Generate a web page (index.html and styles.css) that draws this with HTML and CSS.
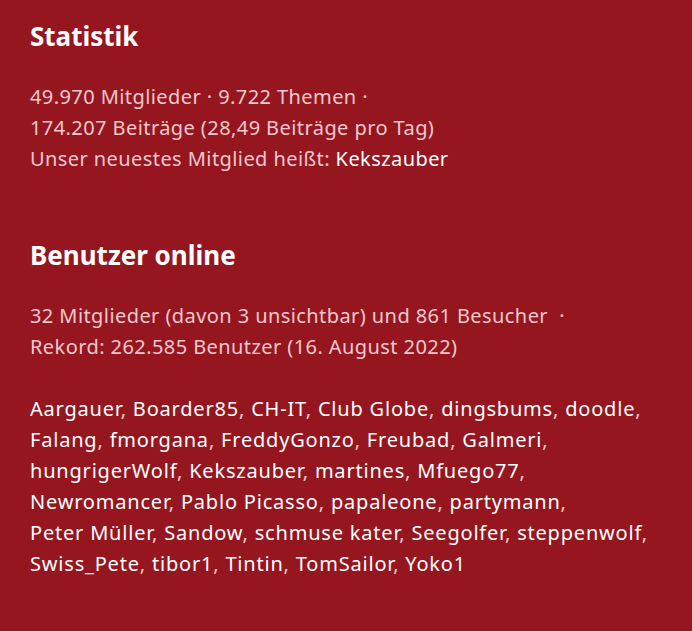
FILE: index.html
```html
<!DOCTYPE html>
<html lang="de">
<head>
  <meta charset="UTF-8">
  <title>Statistik</title>
  <link rel="stylesheet" href="styles.css">
</head>
<body>
  <div class="stat-block">
    <h3>Statistik</h3>
    <p class="stat-text">
      49.970 Mitglieder &middot; 9.722 Themen &middot;<br>
      174.207 Beiträge (28,49 Beiträge pro Tag)<br>
      Unser neuestes Mitglied heißt: <a href="#">Kekszauber</a>
    </p>
  </div>

  <div class="stat-block">
    <h3>Benutzer online</h3>
    <p class="stat-text">
      32 Mitglieder (davon 3 unsichtbar) und 861 Besucher &nbsp;&middot;<br>
      Rekord: 262.585 Benutzer (16. August 2022)
    </p>
    <p class="online-list">
      <a href="#">Aargauer</a>, <a href="#">Boarder85</a>, <a href="#">CH-IT</a>, <a href="#">Club Globe</a>, <a href="#">dingsbums</a>, <a href="#">doodle</a>,<br>
      <a href="#">Falang</a>, <a href="#">fmorgana</a>, <a href="#">FreddyGonzo</a>, <a href="#">Freubad</a>, <a href="#">Galmeri</a>,<br>
      <a href="#">hungrigerWolf</a>, <a href="#">Kekszauber</a>, <a href="#">martines</a>, <a href="#">Mfuego77</a>,<br>
      <a href="#">Newromancer</a>, <a href="#">Pablo Picasso</a>, <a href="#">papaleone</a>, <a href="#">partymann</a>,<br>
      <a href="#">Peter Müller</a>, <a href="#">Sandow</a>, <a href="#">schmuse kater</a>, <a href="#">Seegolfer</a>, <a href="#">steppenwolf</a>,<br>
      <a href="#">Swiss_Pete</a>, <a href="#">tibor1</a>, <a href="#">Tintin</a>, <a href="#">TomSailor</a>, <a href="#">Yoko1</a>
    </p>
  </div>
</body>
</html>
```

FILE: styles.css
```css
body {
  margin: 0;
  padding: 19px 30px;
  background-color: #961620;
  font-family: 'Noto Sans', 'Open Sans', sans-serif;
  color: #f3c8cd;
  min-height: 631px;
  box-sizing: border-box;
}
.stat-block {
  margin-bottom: 64px;
}
h3 {
  color: #fff;
  font-size: 26px;
  font-weight: 700;
  line-height: 34px;
  margin: 0 0 28px 0;
}
.stat-text, .online-list {
  font-size: 20px;
  line-height: 31px;
  letter-spacing: 0.42px;
  margin: 0;
}
.online-list {
  margin-top: 31px;
  letter-spacing: 0.8px;
}
a {
  color: #fff;
  text-decoration: none;
}
```
